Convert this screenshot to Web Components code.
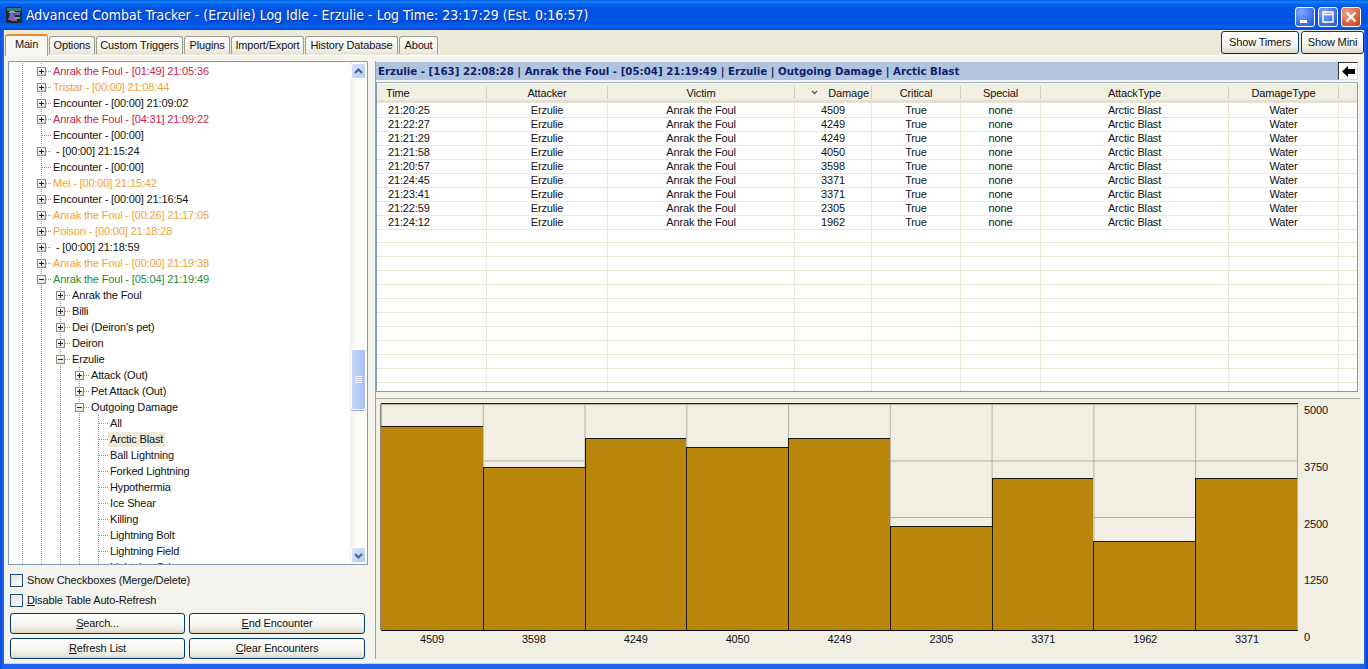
<!DOCTYPE html>
<html>
<head>
<meta charset="utf-8">
<title>Advanced Combat Tracker</title>
<style>
  html, body { margin: 0; height: 100%; overflow: hidden; background: #0053e1; }
  body { font: 11px "Liberation Sans", Arial, sans-serif; letter-spacing: -.15px; color: #111; }
</style>
</head>
<body>
<ct-window>
  <ct-titlebar slot="title">Advanced Combat Tracker - (Erzulie) Log Idle - Erzulie - Log Time: 23:17:29 (Est. 0:16:57)</ct-titlebar>
  <ct-tab active>Main</ct-tab>
  <ct-tab w="46">Options</ct-tab>
  <ct-tab w="87">Custom Triggers</ct-tab>
  <ct-tab w="46">Plugins</ct-tab>
  <ct-tab w="73">Import/Export</ct-tab>
  <ct-tab w="93">History Database</ct-tab>
  <ct-tab w="39">About</ct-tab>
  <ct-button slot="actions" style="width:78px;height:23px">Show Timers</ct-button>
  <ct-button slot="actions" style="width:63px;height:23px">Show Mini</ct-button>

  <ct-tree slot="left"></ct-tree>
  <ct-check slot="left">Show Checkboxes (Merge/Delete)</ct-check>
  <ct-check slot="left"><u>D</u>isable Table Auto-Refresh</ct-check>
  <ct-button-grid slot="left">
    <ct-button><u>S</u>earch...</ct-button>
    <ct-button><u>E</u>nd Encounter</ct-button>
    <ct-button><u>R</u>efresh List</ct-button>
    <ct-button><u>C</u>lear Encounters</ct-button>
  </ct-button-grid>

  <ct-crumb slot="right">Erzulie - [163] 22:08:28 | Anrak the Foul - [05:04] 21:19:49 | Erzulie | Outgoing Damage | Arctic Blast</ct-crumb>
  <ct-table slot="right"></ct-table>
  <ct-chart slot="right"></ct-chart>
</ct-window>

<script>
function tpl(html) {
  const t = document.createElement('template')
  t.innerHTML = html
  return t
}

class Base extends HTMLElement {
  constructor() {
    super()
    this.attachShadow({ mode: 'open' })
    this.shadowRoot.appendChild(this.constructor.template.content.cloneNode(true))
  }
}

class CtWindow extends Base {
  static template = tpl(`
    <style>
      :host { display: flex; flex-direction: column; width: 1368px; height: 669px; box-sizing: border-box;
        padding: 0 4px 5px; background: linear-gradient(to right, #0a4fd8, #1c63f0 3px, #1c63f0 1364px, #0a3fc4); }
      .strip { display: flex; align-items: flex-end; height: 25px; padding-left: 1px; background: #ece9d8; }
      .tabs { display: flex; gap: 1px; align-items: flex-end; flex: 1; }
      .actions { display: flex; gap: 2px; align-self: flex-start; margin-top: 1px; }
      .page { flex: 1; display: flex; min-height: 0; padding: 5px 3px 4px 4px; background: #f4f3ee;
        border-top: 1px solid #fff; border-bottom: 1px solid #d8d5c6; border-right: 1px solid #fff; }
      .left { width: 360px; display: flex; flex-direction: column; margin-right: 7px; }
      .right { flex: 1; min-width: 0; display: flex; flex-direction: column; border-left: 1px solid #a09e92; padding-top: 1px; }
    </style>
    <slot name="title"></slot>
    <div class="strip">
      <div class="tabs"><slot></slot></div>
      <div class="actions"><slot name="actions"></slot></div>
    </div>
    <div class="page">
      <div class="left"><slot name="left"></slot></div>
      <div class="right"><slot name="right"></slot></div>
    </div>`)
}

class CtTitlebar extends Base {
  static template = tpl(`
    <style>
      :host { display: flex; align-items: center; height: 30px; margin: 0 -4px; padding: 0 7px 0 6px; box-sizing: border-box;
        color: #fff; font: 14px "DejaVu Sans Condensed", "DejaVu Sans", sans-serif; letter-spacing: 0; text-shadow: 1px 1px 0 #0f2d9c;
        background: linear-gradient(#0a58e0 0, #0a8bff 2px, #0862ec 4px, #0054e3 9px, #0052e0 22px, #0560f0 27px, #0546d0 30px); }
      .text { flex: 1; margin-left: 4px; white-space: pre; }
      .btns { display: flex; gap: 3px; margin-top: 3px; }
      .b { width: 20px; height: 20px; box-sizing: border-box; border: 1px solid #fff; border-radius: 3px;
        background: radial-gradient(circle at 30% 25%, #7fa6f6, #3a6fe6 65%, #2a58d0); display: flex; }
      .b.c { background: radial-gradient(circle at 30% 25%, #f0a58a, #dc5a34 65%, #c0401c); }
      svg { display: block; }
    </style>
    <svg width="16" height="16" viewBox="0 0 16 16">
      <rect width="16" height="16" rx="1" fill="#1d2a2a"/>
      <rect x="1" y="1" width="14" height="3" fill="#3c7a6a"/>
      <path d="M2 13l3-9h2l3 9zM9 5h5v3H9z" fill="#7f5fc0"/>
      <path d="M3 6c2-2 5-2 6 0M9 11h5" stroke="#6fd8c0" stroke-width="1.4" fill="none"/>
      <path d="M5 12h6v2H5z" fill="#b04aa0"/>
    </svg>
    <div class="text"><slot></slot></div>
    <div class="btns">
      <div class="b"><svg width="18" height="18"><rect x="4" y="12" width="7" height="3" fill="#fff"/></svg></div>
      <div class="b"><svg width="18" height="18"><path d="M4 4h10v10H4z M4 6.500h10" fill="none" stroke="#fff" stroke-width="1.400"/></svg></div>
      <div class="b c"><svg width="18" height="18"><path d="M4.500 4.500l9 9M13.500 4.500l-9 9" stroke="#fff" stroke-width="2.200"/></svg></div>
    </div>`)
}

class CtTab extends Base {
  static template = tpl(`
    <style>
      :host { display: flex; align-items: center; justify-content: center; box-sizing: border-box; height: 18px; padding-bottom: 1px;
        border: 1px solid #9c9b8f; border-bottom: 0; border-radius: 3px 3px 0 0; white-space: nowrap; margin-bottom: 1px;
        background: linear-gradient(#fdfdfb, #f2f1ea 70%, #e6e3d4); }
      :host([active]) { height: 22px; width: 43px; background: #f8f7f2; border-top: 2px solid #e68b2c; padding-bottom: 4px; margin-bottom: -1px; position: relative; }
    </style>
    <slot></slot>`)
  connectedCallback() {
    if (this.hasAttribute('w')) this.style.width = this.getAttribute('w') + 'px'
  }
}

class CtButton extends Base {
  static template = tpl(`
    <style>
      :host { display: flex; align-items: center; justify-content: center; box-sizing: border-box; height: 21px; padding-bottom: 2px;
        border: 1px solid #003c74; border-radius: 3px; white-space: nowrap;
        background: linear-gradient(#fff, #f5f4ee 60%, #e6e2d6 90%, #d6d0c5); }
    </style>
    <slot></slot>`)
}

class CtButtonGrid extends Base {
  static template = tpl(`
    <style>
      :host { display: grid; grid-template-columns: 175px 176px; column-gap: 4px; row-gap: 4px; margin: 3px 0 0 2px; }
    </style>
    <slot></slot>`)
}

class CtCheck extends Base {
  static template = tpl(`
    <style>
      :host { display: flex; align-items: center; gap: 4px; height: 20px; padding-left: 2px; }
      i { width: 11px; height: 11px; border: 1px solid #1c5180; background: linear-gradient(135deg, #e0dfd8, #fff); }
    </style>
    <i></i><span><slot></slot></span>`)
}

const TREE = [
  [1, '+', 'crimson', 'Anrak the Foul - [01:49] 21:05:36'],
  [1, '+', 'orange', 'Tristar - [00:00] 21:08:44'],
  [1, '+', '', 'Encounter - [00:00] 21:09:02'],
  [1, '+', 'crimson', 'Anrak the Foul - [04:31] 21:09:22'],
  [1, '', '', 'Encounter - [00:00]'],
  [1, '+', '', ' - [00:00] 21:15:24'],
  [1, '', '', 'Encounter - [00:00]'],
  [1, '+', 'orange', 'Mel - [00:00] 21:15:42'],
  [1, '+', '', 'Encounter - [00:00] 21:16:54'],
  [1, '+', 'orange', 'Anrak the Foul - [00:26] 21:17:05'],
  [1, '+', 'orange', 'Poison - [00:00] 21:18:28'],
  [1, '+', '', ' - [00:00] 21:18:59'],
  [1, '+', 'orange', 'Anrak the Foul - [00:00] 21:19:38'],
  [1, '-', 'green', 'Anrak the Foul - [05:04] 21:19:49'],
  [2, '+', '', 'Anrak the Foul'],
  [2, '+', '', 'Billi'],
  [2, '+', '', "Dei (Deiron's pet)"],
  [2, '+', '', 'Deiron'],
  [2, '-', '', 'Erzulie'],
  [3, '+', '', 'Attack (Out)'],
  [3, '+', '', 'Pet Attack (Out)'],
  [3, '-', '', 'Outgoing Damage'],
  [4, '', '', 'All'],
  [4, '', '', 'Arctic Blast', true],
  [4, '', '', 'Ball Lightning'],
  [4, '', '', 'Forked Lightning'],
  [4, '', '', 'Hypothermia'],
  [4, '', '', 'Ice Shear'],
  [4, '', '', 'Killing'],
  [4, '', '', 'Lightning Bolt'],
  [4, '', '', 'Lightning Field'],
  [4, '', '', 'Lightning Orb']
]
const COLORS = { crimson: '#c8234e', orange: '#f0a040', green: '#1f8a3a' }

class CtScrollbar extends Base {
  static template = tpl(`
    <style>
      :host { display: flex; flex-direction: column; width: 17px; padding: 1px; box-sizing: border-box;
        background: linear-gradient(to right, #f0efe8, #fdfdfb 40%, #fff); }
      .arrow { height: 16px; flex: none; border: 1px solid #fff; border-radius: 2px; box-sizing: border-box;
        background: linear-gradient(135deg, #dbe6fd, #b5c9f6); display: flex; align-items: center; justify-content: center; }
      .track { flex: 1; display: flex; flex-direction: column; }
      .thumb { margin-top: 270px; height: 61px; box-sizing: border-box; border: 1px solid #fff; border-radius: 2px;
        background: linear-gradient(to right, #c7d6fb, #b3c8f6 60%, #a9bff2); box-shadow: 0 1px 0 #8fa8df;
        display: flex; align-items: center; justify-content: center; }
      .grip { width: 7px; height: 7px; background: repeating-linear-gradient(#eef3fe 0 1px, transparent 1px 2px); }
    </style>
    <div class="arrow"><svg width="9" height="7"><path d="M1 5l3.500-3.500L8 5" fill="none" stroke="#4d6185" stroke-width="2"/></svg></div>
    <div class="track"><div class="thumb"><div class="grip"></div></div></div>
    <div class="arrow"><svg width="9" height="7"><path d="M1 2l3.500 3.500L8 2" fill="none" stroke="#4d6185" stroke-width="2"/></svg></div>`)
}

class CtNode extends Base {
  static template = tpl(`
    <style>
      :host { display: flex; height: 16px; align-items: center; padding-left: 4px; white-space: pre; flex: none; }
      .g { width: 19px; height: 16px; flex: none; display: flex; align-items: center; justify-content: center;
        background: repeating-linear-gradient(#8f8f8f 0 1px, transparent 1px 2px) no-repeat 9px 0 / 1px 100%; }
      .j { background: repeating-linear-gradient(#8f8f8f 0 1px, transparent 1px 2px) no-repeat 9px 0 / 1px 100%,
        repeating-linear-gradient(to right, #8f8f8f 0 1px, transparent 1px 2px) no-repeat 10px 8px / 9px 1px; }
      .t { width: 9px; height: 9px; box-sizing: border-box; border: 1px solid #8d8d7f; background: linear-gradient(135deg, #fff, #e2dfd0); }
      .t svg { display: block; }
      .x { padding: 0 2px; height: 15px; line-height: 14px; }
      :host([sel]) .x { background: #ece9d8; }
    </style>`)
  set data([depth, toggle, color, text, sel]) {
    const root = this.shadowRoot
    // one more gutter than the depth: the outer root line at x=22
    for (let i = 0; i <= depth; i++) {
      const g = document.createElement('div')
      g.className = 'g'
      root.appendChild(g)
      if (i == depth) {
        g.classList.add('j')
        if (toggle) {
          g.innerHTML = `<div class="t"><svg width="7" height="7"><path d="${toggle == '+' ? 'M1 3.500h5M3.500 1v5' : 'M1 3.500h5'}" stroke="#222"/></svg></div>`
        }
      }
    }
    const x = document.createElement('span')
    x.className = 'x'
    x.textContent = text
    if (color) x.style.color = COLORS[color]
    if (sel) this.setAttribute('sel', '')
    root.appendChild(x)
  }
}

class CtTree extends Base {
  static template = tpl(`
    <style>
      :host { display: flex; height: 504px; flex: none; box-sizing: border-box; border: 1px solid #7f9db9; background: #fff; margin-bottom: 5px; }
      .rows { flex: 1; min-width: 0; overflow: hidden; padding-top: 1px; display: flex; flex-direction: column; }
    </style>
    <div class="rows"></div>
    <ct-scrollbar></ct-scrollbar>`)
  connectedCallback() {
    const rows = this.shadowRoot.querySelector('.rows')
    TREE.forEach(d => {
      const n = document.createElement('ct-node')
      n.data = d
      rows.appendChild(n)
    })
  }
}

class CtCrumb extends Base {
  static template = tpl(`
    <style>
      :host { display: flex; align-items: center; height: 18px; box-sizing: border-box; padding-left: 2px; margin-right: 2px; flex: none;
        background: #b0c4de; color: #0f1f6e; font: bold 10.24px "DejaVu Sans", sans-serif; letter-spacing: 0; white-space: nowrap; }
      .text { flex: 1; }
      .back { width: 20px; height: 18px; box-sizing: border-box; background: #fff; border: 1px solid;
        border-color: #333 #d5dde8 #d5dde8 #333; display: flex; align-items: center; justify-content: center; }
    </style>
    <div class="text"><slot></slot></div>
    <div class="back"><svg width="13" height="11"><path d="M0 5.500L6 0v3h7v5H6v3z" fill="#000"/></svg></div>`)
}

const COLS = '110px 121px 187px 77px 89px 80px 188px 110px 1fr'
const HEAD = ['Time', 'Attacker', 'Victim', 'Damage', 'Critical', 'Special', 'AttackType', 'DamageType', '']
const ROWS = [
  ['21:20:25', '4509'], ['21:22:27', '4249'], ['21:21:29', '4249'], ['21:21:58', '4050'], ['21:20:57', '3598'],
  ['21:24:45', '3371'], ['21:23:41', '3371'], ['21:22:59', '2305'], ['21:24:12', '1962']
]

class CtTable extends Base {
  static template = tpl(`
    <style>
      :host { display: block; height: 310px; flex: none; box-sizing: border-box; margin: 2px 2px 0 0; overflow: hidden;
        border: 1px solid #7f9db9; border-top-color: #9fb0c4; background: #fff; }
      .r { display: grid; grid-template-columns: ${COLS}; }
      .h { height: 20px; box-sizing: border-box; border-bottom: 3px solid #e4e1d0; background: #f1efe2; border-top: 1px solid #f8f7f1; }
      .h div { display: flex; align-items: center; justify-content: center; border-right: 1px solid #cfccbc; margin: 2px 0; height: 13px; }
      .h div:first-child { justify-content: flex-start; padding-left: 9px; }
      .h .sort { justify-content: flex-end; padding-right: 2px; gap: 10px; }
      .b { height: 14px; line-height: 14px; }
      .b div { text-align: center; box-sizing: border-box; border-right: 1px solid #ece9d8; border-bottom: 1px solid #ece9d8; }
      .b div:first-child { text-align: left; padding-left: 11px; }
      .b div:last-child { border-right: 0; }
    </style>
    <div class="r h"></div>
    <div class="body"></div>`)
  connectedCallback() {
    const root = this.shadowRoot
    const head = root.querySelector('.h')
    HEAD.forEach((t, i) => {
      const c = document.createElement('div')
      if (t == 'Damage') {
        c.className = 'sort'
        c.innerHTML = '<svg width="7" height="5"><path d="M1 1l2.500 2.500L6 1" fill="none" stroke="#555" stroke-width="1.300"/></svg><span>Damage</span>'
      } else c.textContent = t
      if (i == 8) c.style.borderRight = '0'
      head.appendChild(c)
    })
    const body = root.querySelector('.body')
    for (let i = 0; i < 21; i++) {
      const r = document.createElement('div')
      r.className = 'r b'
      const d = ROWS[i]
      const cells = d ? [d[0], 'Erzulie', 'Anrak the Foul', d[1], 'True', 'none', 'Arctic Blast', 'Water', ''] : Array(9).fill('')
      r.innerHTML = cells.map(c => `<div>${c}</div>`).join('')
      body.appendChild(r)
    }
  }
}

const BARS = [4509, 3598, 4249, 4050, 4249, 2305, 3371, 1962, 3371]

class CtChart extends Base {
  static template = tpl(`
    <style>
      :host { display: grid; grid-template-columns: 917px 1fr; grid-template-rows: 226px 14px; flex: none; height: 261px;
        box-sizing: border-box; margin-top: 6px; padding: 5px 0 0 5px; column-gap: 6px; row-gap: 2px;
        background: #f1eee3; border-top: 1px solid #a8a69a; }
      .plot { grid-column: 1; grid-row: 1; display: grid; grid-template-columns: repeat(9, 1fr); align-items: end;
        width: 917px; box-sizing: border-box; border-right: 1px solid #b4b1a4;
        box-shadow: -1px 0 0 #8a8878, 0 -1px 0 #222, 0 1px 0 #111;
        background:
          linear-gradient(to right, #b4b1a4 1px, transparent 1px) 0 0 / calc(100% / 9) 100%,
          linear-gradient(#b4b1a4 1px, transparent 1px) 0 0 / 100% 25%; }
      .bar { background: #b8860b; border-top: 1px solid #1a1403; border-left: 1px solid #1a1403; box-sizing: border-box; }
      .bar:first-child { border-left: 0; }
      .y { grid-column: 2; grid-row: 1 / 3; display: flex; flex-direction: column; justify-content: space-between; height: 241px; margin-top: -1px; line-height: 14px; }
      .x { grid-column: 1; grid-row: 2; display: grid; grid-template-columns: repeat(9, 1fr); text-align: center; line-height: 14px; }
    </style>
    <div class="plot"></div>
    <div class="y"><span>5000</span><span>3750</span><span>2500</span><span>1250</span><span>0</span></div>
    <div class="x"></div>`)
  connectedCallback() {
    const root = this.shadowRoot
    root.querySelector('.plot').innerHTML = BARS.map(v => `<div class="bar" style="height:${v / 50}%"></div>`).join('')
    root.querySelector('.x').innerHTML = BARS.map(v => `<span>${v}</span>`).join('')
  }
}

customElements.define('ct-scrollbar', CtScrollbar)
customElements.define('ct-node', CtNode)
customElements.define('ct-tree', CtTree)
customElements.define('ct-titlebar', CtTitlebar)
customElements.define('ct-tab', CtTab)
customElements.define('ct-button', CtButton)
customElements.define('ct-button-grid', CtButtonGrid)
customElements.define('ct-check', CtCheck)
customElements.define('ct-crumb', CtCrumb)
customElements.define('ct-table', CtTable)
customElements.define('ct-chart', CtChart)
customElements.define('ct-window', CtWindow)
</script>
</body>
</html>
